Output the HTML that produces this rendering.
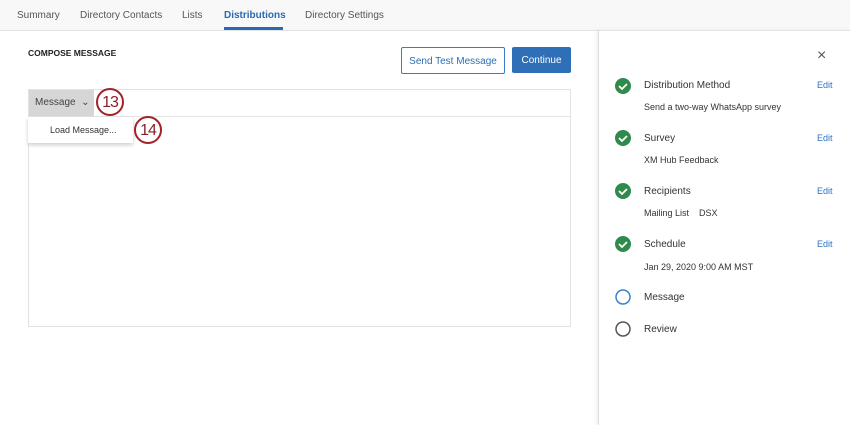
<!DOCTYPE html><html><head><style>
body{margin:0;width:850px;height:425px;background:#fff;font-family:"Liberation Sans",sans-serif;position:relative;overflow:hidden;color:#333}
.a{position:absolute;white-space:nowrap}
.tabs{position:absolute;left:0;top:0;width:850px;height:30px;background:#f8f8f8;border-bottom:1px solid #e3e3e3}
.t{position:absolute;top:10px;font-size:10px;color:#555}
.s{font-size:10px;color:#333}
.e{font-size:9px;color:#2d72c0;left:817px}
.circ{position:absolute;width:24px;height:24px;border:2px solid #a3222a;border-radius:50%;background:#fff;font-size:16px;color:#8a1f27;text-align:center;line-height:25px;letter-spacing:-1px}
.btn{display:flex;align-items:center;justify-content:center;font-size:10px}
</style></head><body>
<div class="tabs">
<span class="t" style="left:17px">Summary</span>
<span class="t" style="left:80px">Directory Contacts</span>
<span class="t" style="left:182px">Lists</span>
<span class="t" style="left:224px;color:#2a6ab3;font-weight:bold">Distributions</span>
<div class="a" style="left:224px;top:27px;width:59px;height:3px;background:#2a6ab3"></div>
<span class="t" style="left:305px">Directory Settings</span>
</div>
<div class="a" style="left:28px;top:48px;font-size:8.5px;font-weight:bold;color:#222">COMPOSE MESSAGE</div>
<div class="a btn" style="left:401px;top:47px;width:102px;height:24px;border:1px solid #3a7cc7;border-radius:2px;color:#2d6db5;padding-top:1px;box-sizing:content-box">Send Test Message</div>
<div class="a btn" style="left:512px;top:47px;width:59px;height:25px;background:#2f6fb8;border-radius:2px;color:#fff;padding-top:1px">Continue</div>
<div class="a" style="left:28px;top:89px;width:541px;height:236px;border:1px solid #e2e2e2"></div>
<div class="a" style="left:29px;top:116px;width:541px;height:1px;background:#e6e6e6"></div>
<div class="a" style="left:29px;top:90px;width:65px;height:26px;background:#d6d6d6;font-size:10px;color:#444;line-height:26px;padding-left:6px;box-sizing:border-box">Message &nbsp;⌄</div>
<div class="a" style="left:28px;top:117px;width:105px;height:26px;background:#fff;box-shadow:0 2px 4px rgba(0,0,0,.2);font-size:9px;color:#333;line-height:26px;padding-left:22px;box-sizing:border-box">Load Message...</div>
<div class="circ" style="left:96px;top:88px">13</div>
<div class="circ" style="left:134px;top:116px">14</div>
<div class="a" style="left:598px;top:30px;width:252px;height:395px;border-left:1px solid #ddd;box-shadow:-2px 0 4px rgba(0,0,0,.06)"></div>
<div class="a" style="left:817px;top:47px;font-size:16px;color:#555">×</div>
<svg class="a" style="left:613px;top:76px" width="20" height="265">
<g fill="#2f8a4c"><circle cx="10" cy="10" r="8"/><circle cx="10" cy="62" r="8"/><circle cx="10" cy="115" r="8"/><circle cx="10" cy="168" r="8"/></g>
<g stroke="#fff" stroke-width="1.8" fill="none"><path d="M6 10l3 3 5-5"/><path d="M6 62l3 3 5-5"/><path d="M6 115l3 3 5-5"/><path d="M6 168l3 3 5-5"/></g>
<circle cx="10" cy="221" r="7" fill="none" stroke="#3b82c8" stroke-width="1.5"/>
<circle cx="10" cy="253" r="7" fill="none" stroke="#555" stroke-width="1.5"/>
</svg>
<div class="a s" style="left:644px;top:80px">Distribution Method</div><div class="a e" style="top:80px">Edit</div>
<div class="a" style="left:644px;top:102px;font-size:9px">Send a two-way WhatsApp survey</div>
<div class="a s" style="left:644px;top:133px">Survey</div><div class="a e" style="top:133px">Edit</div>
<div class="a" style="left:644px;top:155px;font-size:9px">XM Hub Feedback</div>
<div class="a s" style="left:644px;top:186px">Recipients</div><div class="a e" style="top:186px">Edit</div>
<div class="a" style="left:644px;top:208px;font-size:9px">Mailing List &nbsp;&nbsp;&nbsp;DSX</div>
<div class="a s" style="left:644px;top:239px">Schedule</div><div class="a e" style="top:239px">Edit</div>
<div class="a" style="left:644px;top:262px;font-size:9px">Jan 29, 2020 9:00 AM MST</div>
<div class="a s" style="left:644px;top:292px">Message</div>
<div class="a s" style="left:644px;top:324px">Review</div>
</body></html>
